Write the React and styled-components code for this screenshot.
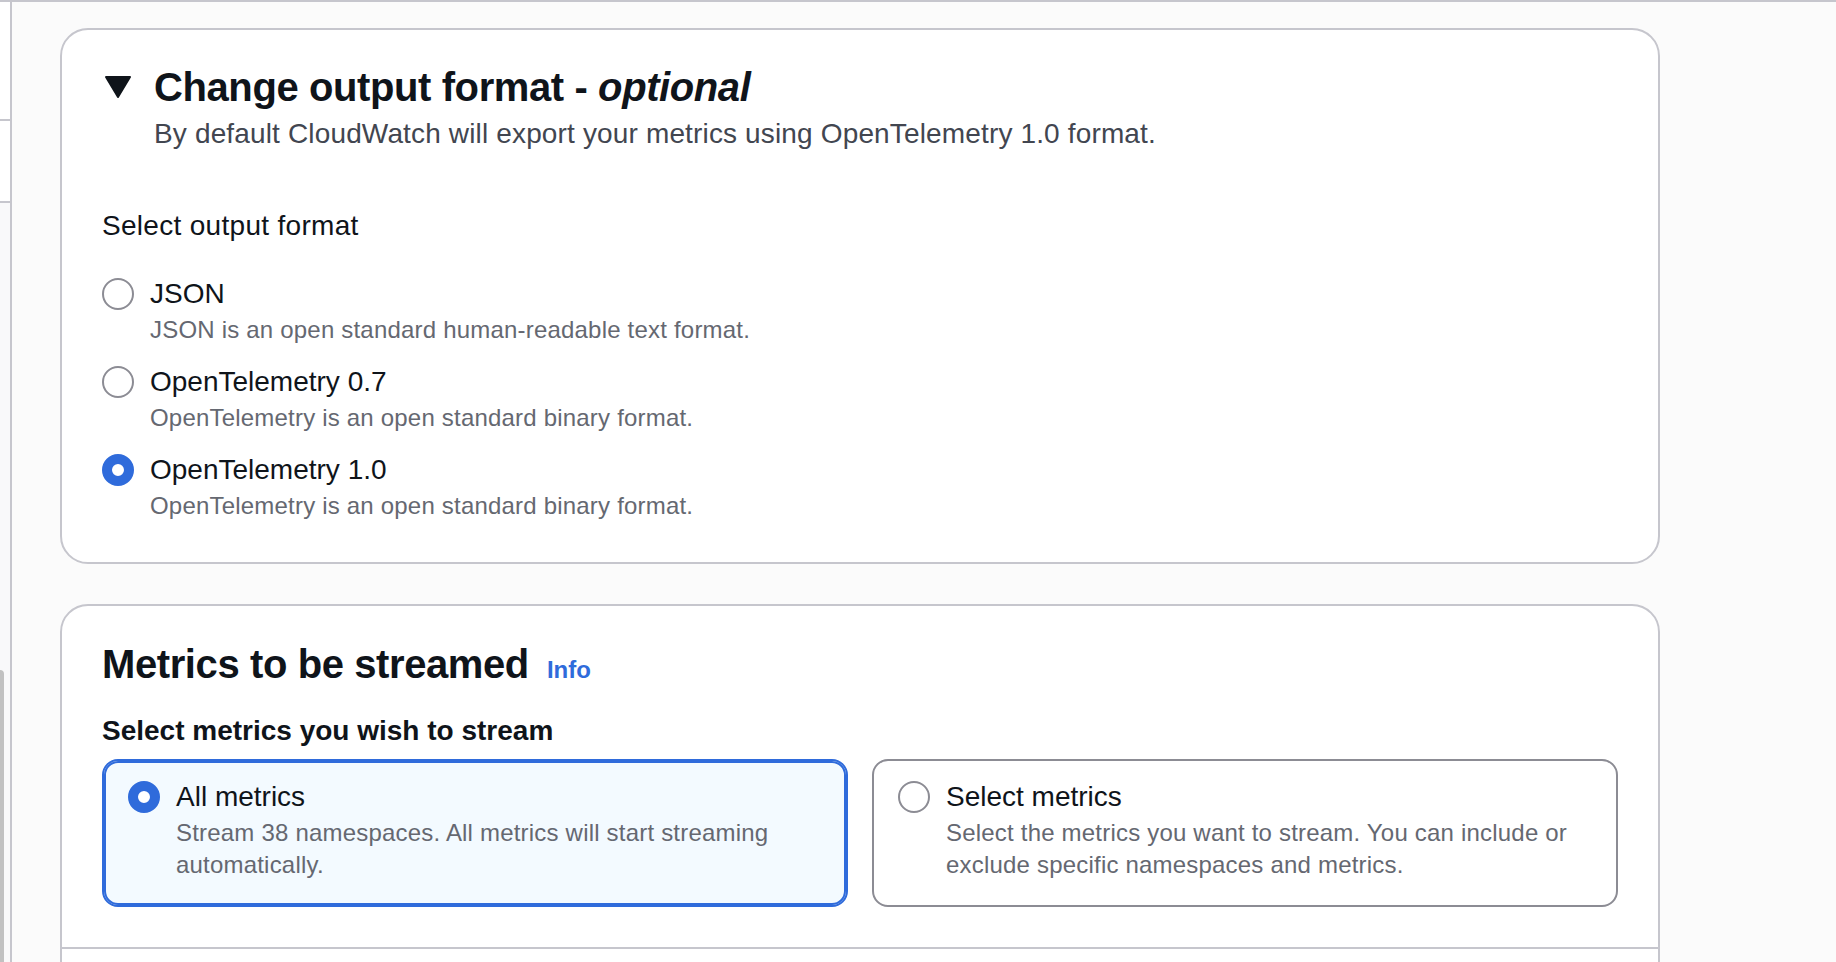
import { createGlobalStyle, styled } from "styled-components"

const GlobalStyle = createGlobalStyle`
    html, body {
        margin: 0;
        height: 100%;
        overflow: hidden;
        background: #fbfbfb;
        font-family: "Liberation Sans", Arial, sans-serif;
        color: #0f141a;
    }
    * { box-sizing: border-box; }
`

const Page = styled.div`
    height: 962px;
    display: flex;
    border-top: 2px solid #c6c6cd;
    overflow: hidden;
    position: relative;
`

const Rail = styled.aside`
    width: 12px;
    flex: none;
    border-right: 2px solid #c6c6cd;
    display: flex;
    flex-direction: column;
`

const RailRow = styled.div`
    height: ${({ $h }) => $h}px;
    flex: ${({ $grow }) => $grow ? 1 : "none"};
    background: ${({ $grow }) => $grow ? "#f9f9fa" : "#fff"};
    border-bottom: ${({ $grow }) => $grow ? "none" : "2px solid #c6c6cd"};
`

const ScrollThumb = styled.div`
    position: absolute;
    left: 0;
    top: 668px;
    width: 4px;
    height: 300px;
    background: #c1c1c1;
    border-radius: 0 4px 0 0;
`

const Main = styled.main`
    flex: none;
    width: 1648px;
    padding: 26px 0 0 48px;
    display: flex;
    flex-direction: column;
    gap: 40px;
`

const Card = styled.section`
    background: #fff;
    border: 2px solid #c6c6cd;
    border-radius: 28px;
    flex: none;
`

const Body = styled.div`
    padding: ${({ $top }) => $top}px 40px 40px 40px;
`

const Header = styled.div`
    display: flex;
    gap: 22px;
    margin-left: 2px;
`

const Caret = styled.svg`
    width: 28px;
    height: 24px;
    flex: none;
    margin-top: 12px;
`

const HeadingText = styled.div`
    display: flex;
    flex-direction: column;
`

const Title = styled.h2`
    margin: 0;
    font-size: 40px;
    line-height: 48px;
    letter-spacing: -0.4px;
    font-weight: 700;
    em { font-style: italic; }
`

const Subtitle = styled.div`
    font-size: 28px;
    line-height: 40px;
    letter-spacing: 0.15px;
    color: #424650;
    margin-top: 3px;
`

const FieldLabel = styled.div`
    font-size: 28px;
    line-height: 40px;
    letter-spacing: ${({ $bold }) => $bold ? 0 : 0.3}px;
    font-weight: ${({ $bold }) => $bold ? 700 : 400};
    margin-top: ${({ $top }) => $top}px;
`

const RadioList = styled.div`
    display: flex;
    flex-direction: column;
    gap: 16px;
    margin-top: 28px;
`

const Option = styled.label`
    display: flex;
    gap: 16px;
`

const Radio = styled.span`
    width: 32px;
    height: 32px;
    flex: none;
    margin-top: 4px;
    border-radius: 50%;
    border: ${({ $on }) => $on ? "10px solid #2f6bdb" : "2px solid #8c8c94"};
    background: #fff;
`

const OptionText = styled.div`
    display: flex;
    flex-direction: column;
`

const OptionName = styled.span`
    font-size: 28px;
    line-height: 40px;
`

const OptionHint = styled.span`
    font-size: 24px;
    line-height: 32px;
    letter-spacing: 0.2px;
    color: #656871;
`

const SectionTitleRow = styled.div`
    display: flex;
    align-items: baseline;
    gap: 18px;
`

const InfoLink = styled.a`
    font-size: 24px;
    font-weight: 700;
    color: #2f6bdb;
`

const Tiles = styled.div`
    display: grid;
    grid-template-columns: 1fr 1fr;
    gap: 24px;
    margin-top: 8px;
`

const Tile = styled.div`
    height: 148px;
    display: flex;
    gap: 16px;
    padding: 16px 20px 16px 24px;
    border-radius: 16px;
    border: 2px solid ${({ $on }) => $on ? "#2f6bdb" : "#8c8c94"};
    box-shadow: ${({ $on }) => $on ? "inset 0 0 0 2px #2f6bdb" : "none"};
    background: ${({ $on }) => $on ? "#f3faff" : "#fff"};
`

const Footer = styled.div`
    height: 40px;
    border-top: 2px solid #c6c6cd;
`

const formats = [
    { name: "JSON", hint: "JSON is an open standard human-readable text format." },
    { name: "OpenTelemetry 0.7", hint: "OpenTelemetry is an open standard binary format." },
    { name: "OpenTelemetry 1.0", hint: "OpenTelemetry is an open standard binary format.", on: true },
]

const tiles = [
    { name: "All metrics", hint: "Stream 38 namespaces. All metrics will start streaming automatically.", on: true },
    { name: "Select metrics", hint: "Select the metrics you want to stream. You can include or exclude specific namespaces and metrics." },
]

export default function App() {
    return (
        <>
            <GlobalStyle />
            <Page>
                <Rail>
                    <RailRow $h={119} />
                    <RailRow $h={82} />
                    <RailRow $grow />
                </Rail>
                <ScrollThumb />
                <Main>
                    <Card>
                        <Body $top={33}>
                            <Header>
                                <Caret viewBox="0 0 28 24">
                                    <polygon points="2,2 26,2 14,22" fill="#0f141a" stroke="#0f141a" strokeWidth="2" strokeLinejoin="round" />
                                </Caret>
                                <HeadingText>
                                    <Title>Change output format - <em>optional</em></Title>
                                    <Subtitle>By default CloudWatch will export your metrics using OpenTelemetry 1.0 format.</Subtitle>
                                </HeadingText>
                            </Header>
                            <FieldLabel $top={52}>Select output format</FieldLabel>
                            <RadioList>
                                {formats.map(item => (
                                    <Option key={item.name}>
                                        <Radio $on={item.on} />
                                        <OptionText>
                                            <OptionName>{item.name}</OptionName>
                                            <OptionHint>{item.hint}</OptionHint>
                                        </OptionText>
                                    </Option>
                                ))}
                            </RadioList>
                        </Body>
                    </Card>
                    <Card>
                        <Body $top={34}>
                            <SectionTitleRow>
                                <Title>Metrics to be streamed</Title>
                                <InfoLink>Info</InfoLink>
                            </SectionTitleRow>
                            <FieldLabel $bold $top={23}>Select metrics you wish to stream</FieldLabel>
                            <Tiles>
                                {tiles.map(item => (
                                    <Tile key={item.name} $on={item.on}>
                                        <Radio $on={item.on} />
                                        <OptionText>
                                            <OptionName>{item.name}</OptionName>
                                            <OptionHint>{item.hint}</OptionHint>
                                        </OptionText>
                                    </Tile>
                                ))}
                            </Tiles>
                        </Body>
                        <Footer />
                    </Card>
                </Main>
            </Page>
        </>
    )
}
